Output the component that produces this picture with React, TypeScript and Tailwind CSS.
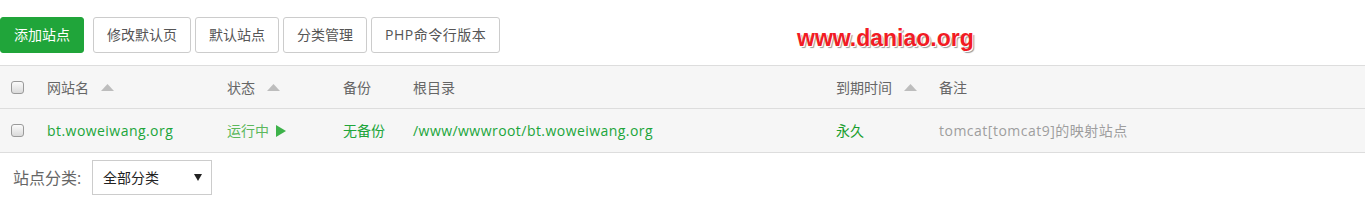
import React from "react"

const font = "font-['Open_Sans','Noto_Sans_CJK_SC',sans-serif]"

function Checkbox() {
  return (
    <span className="block h-[13px] w-[13px] rounded-[3px] border border-[#9a9a9a] bg-[linear-gradient(#fbfbfb,#dadada)]" />
  )
}

function SortUp() {
  return (
    <svg width="13" height="7" viewBox="0 0 13 7" className="ml-3">
      <polygon points="6.5,0 13,7 0,7" fill="#bdbdbd" />
    </svg>
  )
}

function Play() {
  return (
    <svg width="10" height="12" viewBox="0 0 10 12" className="ml-[7px]">
      <polygon points="0,0 10,6 0,12" fill="#3db24a" />
    </svg>
  )
}

const buttons = ["修改默认页", "默认站点", "分类管理"]

export default function App() {
  return (
    <div className={`relative w-[1365px] h-[202px] bg-white pt-[17px] text-[14px] ${font}`}>
      {/* top buttons */}
      <div className="flex items-center gap-[4px]">
        <button className="mr-[5px] h-9 rounded-[3px] border border-[#20a53a] bg-[#20a53a] px-[13px] leading-[20px] text-white">
          添加站点
        </button>
        {buttons.map((b) => (
          <button
            key={b}
            className="h-9 rounded-[3px] border border-[#cccccc] bg-white px-[13px] leading-[20px] text-[#555]"
          >
            {b}
          </button>
        ))}
        <button className="h-9 rounded-[3px] border border-[#cccccc] bg-white px-[13px] leading-[20px] tracking-[0.5px] text-[#555]">
          PHP命令行版本
        </button>
      </div>

      <div className="absolute left-[797px] top-[27px] font-['Liberation_Sans',Arial,sans-serif] text-[23px] font-bold leading-[23px] text-[#f21b24] [text-shadow:1px_1px_0_#fff,2px_2px_1px_#9a9a9a]">
        www.daniao.org
      </div>

      {/* table */}
      <div className="mt-3 border-y border-[#dddddd] bg-[#f6f6f6]">
        <div className="flex h-[43px] items-center border-b border-[#dddddd] text-[#666]">
          <div className="w-[47px] pl-[11px]">
            <Checkbox />
          </div>
          <div className="flex w-[180px] items-center">
            网站名
            <SortUp />
          </div>
          <div className="flex w-[116px] items-center">
            状态
            <SortUp />
          </div>
          <div className="w-[70px]">备份</div>
          <div className="w-[423px]">根目录</div>
          <div className="flex w-[103px] items-center">
            到期时间
            <SortUp />
          </div>
          <div className="flex-1">备注</div>
        </div>
        <div className="flex h-[43px] items-center">
          <div className="w-[47px] pl-[11px]">
            <Checkbox />
          </div>
          <div className="w-[180px] tracking-[0.45px] text-[#20a53a]">bt.woweiwang.org</div>
          <div className="flex w-[116px] items-center text-[#5cb85c]">
            运行中
            <Play />
          </div>
          <div className="w-[70px] text-[#20a53a]">无备份</div>
          <div className="w-[423px] tracking-[0.45px] text-[#20a53a]">/www/wwwroot/bt.woweiwang.org</div>
          <div className="w-[103px] text-[#1a9e2e]">永久</div>
          <div className="flex-1 tracking-[0.5px] text-[#9e9e9e]">tomcat[tomcat9]的映射站点</div>
        </div>
      </div>

      {/* category filter */}
      <div className="mt-[7px] flex items-center">
        <div className="w-[92px] pl-[13px] text-[16px] text-[#666]">站点分类:</div>
        <div className="flex h-[35px] w-[120px] items-center justify-between border border-[#cccccc] bg-white pl-[10px] pr-[9px] text-[#222]">
          <span>全部分类</span>
          <svg width="8" height="7" viewBox="0 0 8 7">
            <polygon points="0,0 8,0 4,7" fill="#222" />
          </svg>
        </div>
      </div>
    </div>
  )
}
